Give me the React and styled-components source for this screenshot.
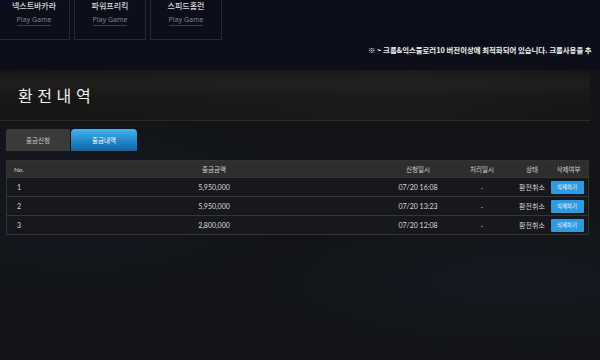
import styled, { createGlobalStyle } from "styled-components"

const GlobalStyle = createGlobalStyle`
  html, body {
    margin: 0;
    padding: 0;
    background: #111318;
    font-family: "Noto Sans CJK KR", "Noto Sans", sans-serif;
  }
  #root {
    width: 600px;
    height: 360px;
    overflow: hidden;
  }
`

const Page = styled.div`
  width: 600px;
  height: 360px;
  display: flex;
  flex-direction: column;
  background:
    radial-gradient(ellipse 260px 70px at 520px 280px, rgba(28, 40, 52, 0.3), transparent),
    radial-gradient(ellipse 220px 90px at 80px 200px, rgba(22, 34, 50, 0.3), transparent),
    #121418;
`

const Top = styled.div`
  background: #0c0f1b;
  height: 70px;
  display: flex;
  flex-direction: column;
`

const Games = styled.div`
  display: flex;
  gap: 4px;
  margin-left: -2px;
  margin-top: -4px;
`

const GameCard = styled.div`
  width: 72px;
  height: 44px;
  box-sizing: border-box;
  border: 1px solid #262a36;
  border-top: none;
  display: flex;
  flex-direction: column;
  align-items: center;
  padding-top: 5px;
  gap: 5px;
`

const GameName = styled.span`
  font-size: 8px;
  color: #d8d8d8;
  font-weight: 500;
  line-height: 10px;
`

const PlayLink = styled.span`
  font-size: 7px;
  font-family: "Noto Sans", sans-serif;
  color: #7d8088;
  line-height: 8px;
  border-bottom: 1px solid #3a3e4a;
  padding-bottom: 1px;
`

const Notice = styled.div`
  margin-top: 5px;
  margin-left: 368px;
  width: 224px;
  white-space: nowrap;
  font-family: "Noto Sans CJK KR", sans-serif;
  font-size: 7.4px;
  font-weight: 700;
  color: #f2f2f2;
  line-height: 10px;
`

const Band = styled.div`
  height: 51px;
  box-sizing: border-box;
  border-bottom: 1px solid #2a2a2a;
  margin-right: 10px;
  display: flex;
  align-items: center;
  padding-left: 18px;
  background:
    linear-gradient(180deg, rgba(0, 0, 0, 0) 0%, rgba(44, 42, 38, 0.45) 25%, rgba(30, 29, 27, 0.2) 60%, rgba(20, 20, 20, 0) 100%),
    linear-gradient(90deg, #151515 0%, #181817 40%, #1b1a19 70%, #151515 100%);
`

const Title = styled.h2`
  margin: 0;
  font-size: 16px;
  font-weight: 400;
  color: #f0f0f0;
  letter-spacing: 0.5px;
`

const Content = styled.div`
  padding: 8px 11px 0 6px;
  display: flex;
  flex-direction: column;
`

const Tabs = styled.div`
  display: flex;
  gap: 1px;
`

const Tab = styled.div`
  width: ${p => (p.$active ? "66px" : "64px")};
  height: 22px;
  display: flex;
  align-items: center;
  justify-content: center;
  font-size: 6.5px;
  color: ${p => (p.$active ? "#ffffff" : "#c9c9c9")};
  border-radius: ${p => (p.$active ? "4px 4px 0 0" : "3px 0 0 0")};
  background: ${p =>
    p.$active
      ? "linear-gradient(180deg, #49b4ef 0%, #1f86c9 55%, #1464a0 100%)"
      : "#3a3a3a"};
`

const Table = styled.div`
  margin-top: 9px;
  border: 1px solid #333;
  display: flex;
  flex-direction: column;
`

const Row = styled.div`
  display: grid;
  grid-template-columns: 34px 346px 62px 66px 34px 1fr;
  height: ${p => (p.$head ? "16px" : "18px")};
  align-items: center;
  background: ${p => (p.$head ? "#2e2e2f" : "rgba(24, 25, 29, 0.92)")};
  border-top: ${p => (p.$head ? "none" : "1px solid #34363a")};
  font-size: ${p => (p.$head ? "6.5px" : "7px")};
  color: ${p => (p.$head ? "#d0d0d0" : "#dcdcdc")};
`

const Cell = styled.div`
  padding-left: ${p => (p.$left ? p.$pad : "0")};
  font-family: ${p => (p.$num ? '"Lato", "Noto Sans", sans-serif' : "inherit")};
  display: flex;
  justify-content: ${p => (p.$left ? "flex-start" : "center")};
`

const DeleteBtn = styled.button`
  width: 33px;
  height: 13px;
  border: none;
  padding: 0;
  background: #2e9be0;
  color: #f4f8fb;
  font-size: 5.5px;
  font-family: "Noto Sans CJK KR", sans-serif;
  border-radius: 1px;
  margin-right: 3px;
`

const games = ["넥스트바카라", "파워프리킥", "스피드홈런"]

const rows = [
  { no: 1, amount: "5,950,000", date: "07/20 16:08" },
  { no: 2, amount: "5,950,000", date: "07/20 13:23" },
  { no: 3, amount: "2,800,000", date: "07/20 12:08" },
]

export default function App() {
  return (
    <Page>
      <GlobalStyle />
      <Top>
        <Games>
          {games.map(g => (
            <GameCard key={g}>
              <GameName>{g}</GameName>
              <PlayLink>Play Game</PlayLink>
            </GameCard>
          ))}
        </Games>
        <Notice>※ ~ 크롬&익스플로러10 버전이상에 최적화되어 있습니다. 크롬사용을 추</Notice>
      </Top>
      <Band>
        <Title>환 전 내 역</Title>
      </Band>
      <Content>
        <Tabs>
          <Tab>출금신청</Tab>
          <Tab $active>출금내역</Tab>
        </Tabs>
        <Table>
          <Row $head>
            <Cell $left $pad="7px" $num>No.</Cell>
            <Cell>출금금액</Cell>
            <Cell>신청일시</Cell>
            <Cell>처리일시</Cell>
            <Cell>상태</Cell>
            <Cell>삭제여부</Cell>
          </Row>
          {rows.map(r => (
            <Row key={r.no}>
              <Cell $left $pad="10px" $num>{r.no}</Cell>
              <Cell $num>{r.amount}</Cell>
              <Cell $num>{r.date}</Cell>
              <Cell>-</Cell>
              <Cell>환전취소</Cell>
              <Cell>
                <DeleteBtn>삭제하기</DeleteBtn>
              </Cell>
            </Row>
          ))}
        </Table>
      </Content>
    </Page>
  )
}
